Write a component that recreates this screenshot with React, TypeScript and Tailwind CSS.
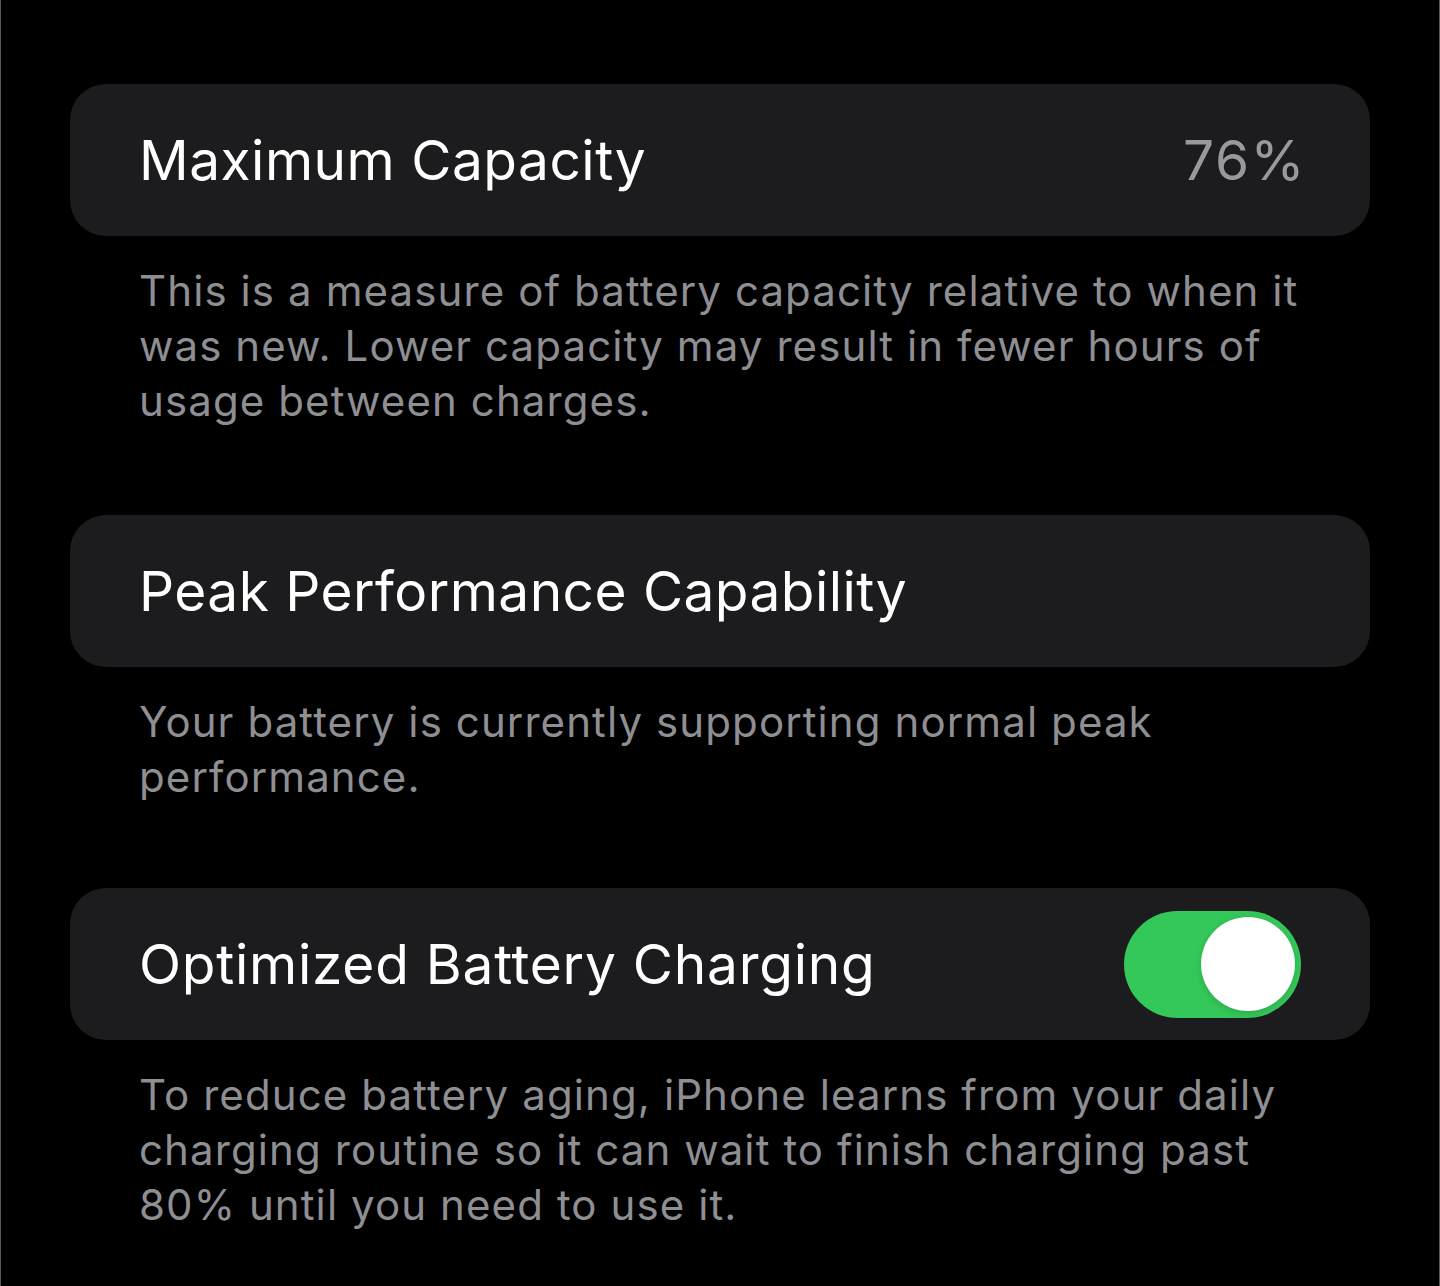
const font = { fontFamily: 'Inter, "Noto Sans", sans-serif' }

const Card = ({ children }: { children: React.ReactNode }) => (
    <div className="h-[152px] rounded-[36px] bg-[#1c1c1e] pl-[69px] pr-[69px] flex items-center justify-between">
        {children}
    </div>
)

const Footer = ({ lines }: { lines: string[] }) => (
    <div className="mt-[27px] pl-[69px] text-[42px] leading-[55px] text-[#8e8e93] tracking-[1.1px]">
        {lines.map((line) => (
            <div key={line} className="whitespace-nowrap">{line}</div>
        ))}
    </div>
)

const Toggle = () => (
    <div className="w-[177px] h-[107px] rounded-full bg-[#34c759] flex items-center justify-end pr-[6px]">
        <div className="w-[94px] h-[94px] rounded-full bg-white shadow-[0_2px_6px_rgba(0,0,0,0.15)]" />
    </div>
)

export default function App() {
    return (
        <div style={font} className="min-h-[1286px] w-full bg-black border-x border-[#555] px-[69px] pt-[84px]">
            <Card>
                <span className="text-[55px] leading-none text-white tracking-[0.5px]">Maximum Capacity</span>
                <span className="text-[55px] leading-none text-[#98989e] tracking-[1.5px] -mr-[5px]">76%</span>
            </Card>
            <Footer lines={[
                'This is a measure of battery capacity relative to when it',
                'was new. Lower capacity may result in fewer hours of',
                'usage between charges.',
            ]} />

            <div className="mt-[87px]">
                <Card>
                    <span className="text-[55px] leading-none text-white tracking-[0.45px]">Peak Performance Capability</span>
                </Card>
            </div>
            <Footer lines={[
                'Your battery is currently supporting normal peak',
                'performance.',
            ]} />

            <div className="mt-[84px]">
                <Card>
                    <span className="text-[55px] leading-none text-white tracking-[0.75px]">Optimized Battery Charging</span>
                    <Toggle />
                </Card>
            </div>
            <Footer lines={[
                'To reduce battery aging, iPhone learns from your daily',
                'charging routine so it can wait to finish charging past',
                '80% until you need to use it.',
            ]} />
        </div>
    )
}
